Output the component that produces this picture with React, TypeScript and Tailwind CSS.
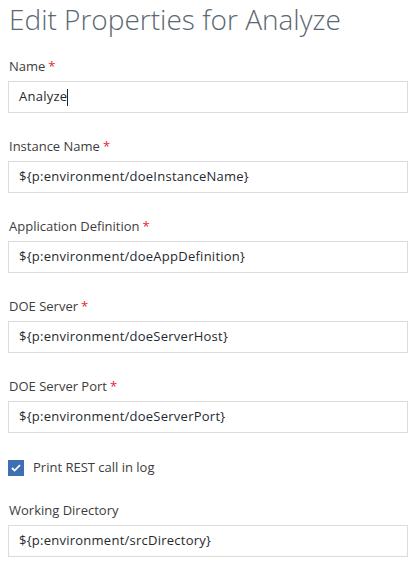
import React from 'react';

const fields: { label: string; value: string; required?: boolean }[] = [
  { label: 'Name', value: 'Analyze', required: true },
  { label: 'Instance Name', value: '${p:environment/doeInstanceName}', required: true },
  { label: 'Application Definition', value: '${p:environment/doeAppDefinition}', required: true },
  { label: 'DOE Server', value: '${p:environment/doeServerHost}', required: true },
  { label: 'DOE Server Port', value: '${p:environment/doeServerPort}', required: true },
];

const Field: React.FC<{ label: string; value: string; required?: boolean; caret?: boolean }> = ({ label, value, required, caret }) => (
  <div className="mb-[23px]">
    <div className="h-[20px] leading-[20px] text-[13px] text-[#3d3d3d] mb-[5px] pl-px">
      {label}
      {required && <span className="text-[#e71d32] ml-[3px]">*</span>}
    </div>
    <div className="h-[32px] w-[400px] border border-[#dcdcdc] bg-white flex items-center pl-[10px] text-[13px] tracking-[0.25px] text-[#1f2a30]">
      <span>{value}</span>
      {caret && <span className="inline-block w-px h-[17px] bg-[#152935]" />}
    </div>
  </div>
);

export default function App() {
  return (
    <div className="w-[420px] h-[566px] bg-white overflow-hidden pl-[8px] font-['Open_Sans','Liberation_Sans',sans-serif]">
      <h1 className="text-[28px] font-light leading-[38px] text-[#5a6872] pl-px mb-[18px]">
        Edit Properties for Analyze
      </h1>
      {fields.map((f, i) => (
        <Field key={f.label} {...f} caret={i === 0} />
      ))}
      <label className="flex items-center h-[20px] mt-[25px] mb-[22px] text-[13px] text-[#3d3d3d]">
        <span className="w-[16px] h-[16px] bg-[#3d70b2] flex items-center justify-center mr-[9px]">
          <svg width="10" height="8" viewBox="0 0 10 8" fill="none">
            <path d="M1 4l2.6 2.6L9 1.2" stroke="#fff" strokeWidth="1.8" />
          </svg>
        </span>
        Print REST call in log
      </label>
      <Field label="Working Directory" value="${p:environment/srcDirectory}" />
    </div>
  );
}
